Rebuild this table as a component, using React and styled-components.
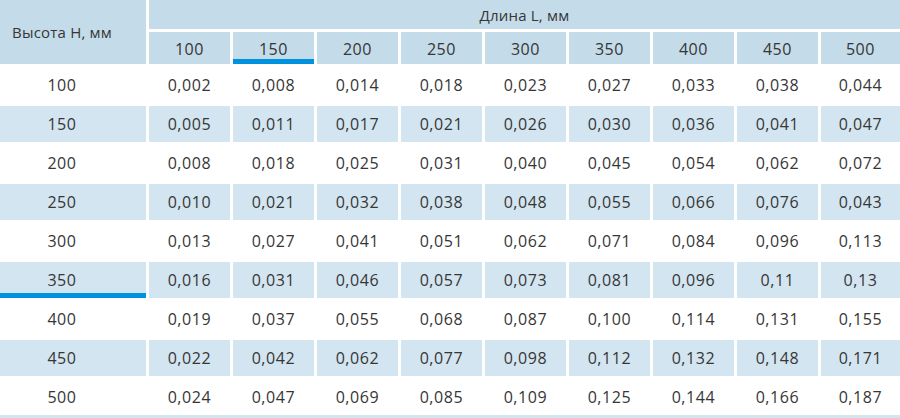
import styled, { createGlobalStyle } from 'styled-components';

const lengths = [100, 150, 200, 250, 300, 350, 400, 450, 500];

const rows = [
  { h: 100, v: ['0,002', '0,008', '0,014', '0,018', '0,023', '0,027', '0,033', '0,038', '0,044'] },
  { h: 150, v: ['0,005', '0,011', '0,017', '0,021', '0,026', '0,030', '0,036', '0,041', '0,047'] },
  { h: 200, v: ['0,008', '0,018', '0,025', '0,031', '0,040', '0,045', '0,054', '0,062', '0,072'] },
  { h: 250, v: ['0,010', '0,021', '0,032', '0,038', '0,048', '0,055', '0,066', '0,076', '0,043'] },
  { h: 300, v: ['0,013', '0,027', '0,041', '0,051', '0,062', '0,071', '0,084', '0,096', '0,113'] },
  { h: 350, v: ['0,016', '0,031', '0,046', '0,057', '0,073', '0,081', '0,096', '0,11', '0,13'] },
  { h: 400, v: ['0,019', '0,037', '0,055', '0,068', '0,087', '0,100', '0,114', '0,131', '0,155'] },
  { h: 450, v: ['0,022', '0,042', '0,062', '0,077', '0,098', '0,112', '0,132', '0,148', '0,171'] },
  { h: 500, v: ['0,024', '0,047', '0,069', '0,085', '0,109', '0,125', '0,144', '0,166', '0,187'] },
];

const GlobalStyle = createGlobalStyle`
  html, body {
    margin: 0;
    padding: 0;
    background: #ffffff;
    overflow: hidden;
  }
  body {
    font-family: "Open Sans", "Liberation Sans", sans-serif;
    color: #363636;
  }
`;

const Table = styled.div`
  width: 900px;
  display: grid;
  grid-template-columns: 146px repeat(8, 81px) 79px;
  grid-template-rows: 29px 32px repeat(9, 36px);
  gap: 3px;
`;

const HeadCell = styled.div`
  background: #c4dbe9;
  display: flex;
  align-items: center;
  justify-content: center;
  font-size: 15px;
  letter-spacing: 0.2px;
  color: #363636;
  box-sizing: border-box;
`;

const CornerCell = styled(HeadCell)`
  grid-row: 1 / span 2;
  padding-right: 22px;
`;

const SpanCell = styled(HeadCell)`
  grid-column: 2 / span 9;
  padding-top: 1px;
`;

const LengthCell = styled(HeadCell)`
  font-size: 16px;
  letter-spacing: 0.6px;
  padding-top: 2px;
  box-shadow: ${p => (p.$active ? 'inset 0 -5px 0 #0091df' : 'none')};
`;

const Cell = styled.div`
  background: ${p => (p.$shaded ? '#d3e5f0' : '#ffffff')};
  display: flex;
  align-items: center;
  justify-content: center;
  font-size: 16px;
  letter-spacing: 0.6px;
  color: #363636;
  box-sizing: border-box;
`;

const RowHead = styled(Cell)`
  padding-right: 22px;
  box-shadow: ${p => (p.$active ? 'inset 0 -5px 0 #0091df' : 'none')};
`;

const BottomLine = styled.div`
  width: 900px;
  height: 3px;
  background: #d3e5f0;
`;

const App = () => {
  return (
    <>
      <GlobalStyle />
      <Table>
        <CornerCell>Высота H, мм</CornerCell>
        <SpanCell>Длина L, мм</SpanCell>
        {lengths.map(l => (
          <LengthCell key={l} $active={l === 150}>{l}</LengthCell>
        ))}
        {rows.map((r, i) => (
          <Row key={r.h} row={r} shaded={i % 2 === 1} />
        ))}
      </Table>
      <BottomLine />
    </>
  );
};

const Row = ({ row, shaded }) => (
  <>
    <RowHead $shaded={shaded} $active={row.h === 350}>{row.h}</RowHead>
    {row.v.map((v, j) => (
      <Cell key={j} $shaded={shaded}>{v}</Cell>
    ))}
  </>
);

export default App;
